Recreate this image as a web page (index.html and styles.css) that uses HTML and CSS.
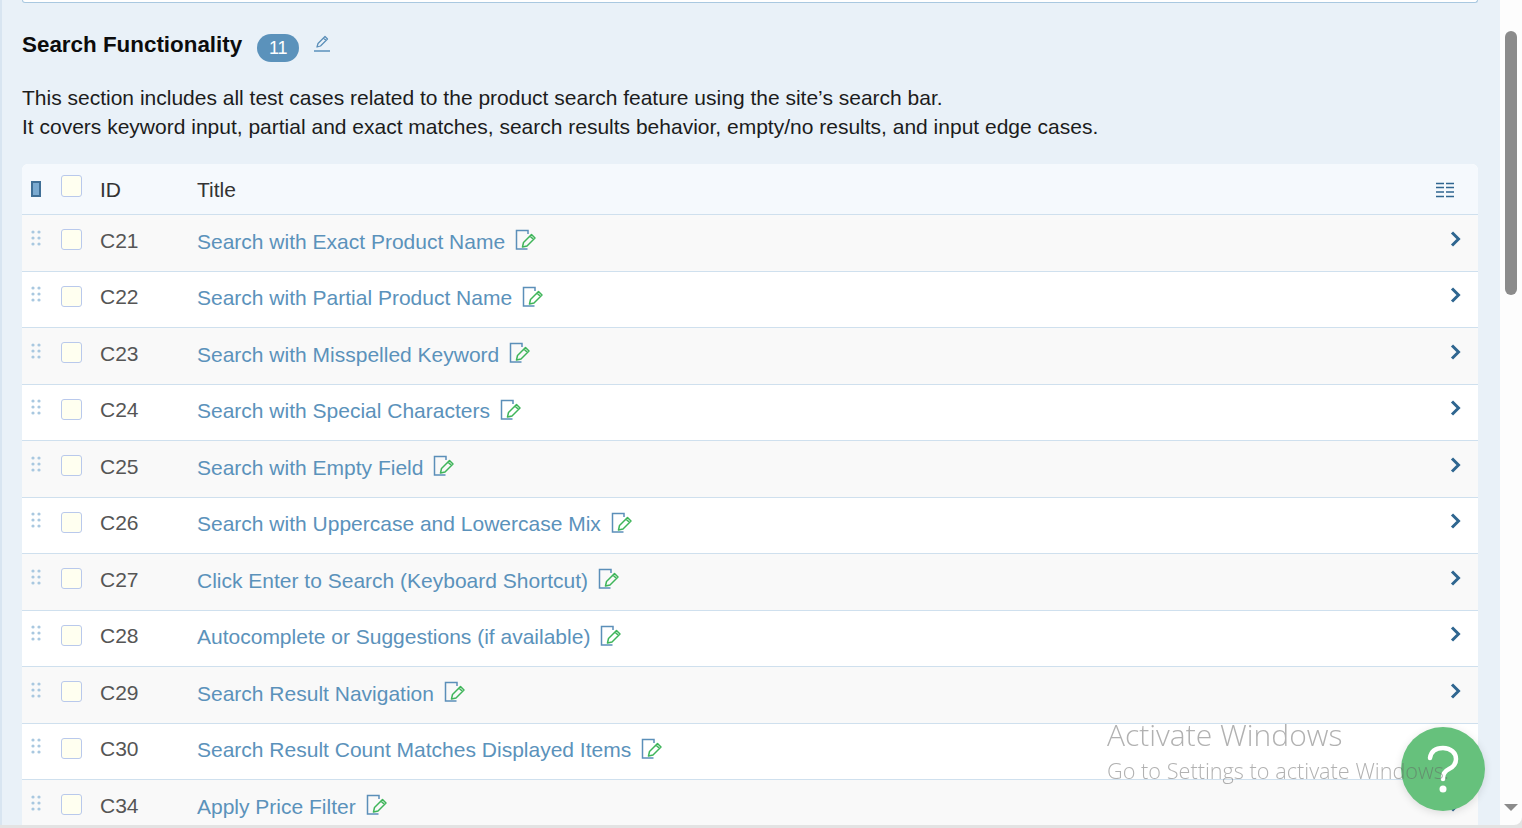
FILE: index.html
```html
<!DOCTYPE html>
<html lang="en">
<head>
    <meta charset="UTF-8">
    <title>Search Functionality</title>
    <link rel="stylesheet" href="styles.css">
</head>
<body>
    <svg class="sprite" width="0" height="0">
        <symbol id="note" viewBox="0 0 22 22">
            <path d="M13 5V1.500H1.500v18.500h11" fill="none" stroke="#5b8fb9" stroke-width="1.500"/>
            <path d="M7.500 18l1-4.500 8-8 3.500 3.500-8 8z M15 7l3.500 3.500" fill="none" stroke="#3fb55a" stroke-width="1.500" stroke-linejoin="round"/>
        </symbol>
        <symbol id="chev" viewBox="0 0 12 16">
            <path d="M2 1.500l6.500 6.500-6.500 6.500" fill="none" stroke="#2f6690" stroke-width="3"/>
        </symbol>
        <symbol id="grip" viewBox="0 0 10 16">
            <g fill="#a9c8e0">
                <circle cx="2" cy="2" r="1.600"/><circle cx="8" cy="2" r="1.600"/>
                <circle cx="2" cy="8" r="1.600"/><circle cx="8" cy="8" r="1.600"/>
                <circle cx="2" cy="14" r="1.600"/><circle cx="8" cy="14" r="1.600"/>
            </g>
        </symbol>
    </svg>

    <div class="window">
        <main class="content">
            <div class="prev-card"></div>

            <div class="section-head">
                <h2>Search Functionality</h2>
                <span class="count">11</span>
                <svg class="edit" width="18" height="20" viewBox="0 0 18 20">
                    <path d="M4 13l1-3.500 7-7 2.500 2.500-7 7z M10.500 4l2.500 2.500" fill="none" stroke="#5b8fb9" stroke-width="1.300" stroke-linejoin="round"/>
                    <rect x="1" y="16" width="16" height="2" fill="#7ea9cb"/>
                </svg>
            </div>

            <p class="desc">This section includes all test cases related to the product search feature using the site’s search bar.<br>It covers keyword input, partial and exact matches, search results behavior, empty/no results, and input edge cases.</p>

            <div class="table">
                <div class="row head">
                    <span class="handle"><i class="marker"></i></span>
                    <span class="check"></span>
                    <span class="id">ID</span>
                    <span class="title">Title</span>
                    <svg class="columns" width="18" height="16" viewBox="0 0 18 16">
                        <path d="M0 1.500h8M10 1.500h8M0 5.500h8M10 5.500h8M0 10h8M10 10h8M0 14.500h8M10 14.500h8" stroke="#2f6690" stroke-width="1.300"/>
                    </svg>
                </div>
                <div class="row"><svg class="grip"><use href="#grip"/></svg><span class="check"></span><span class="id">C21</span><a class="title">Search with Exact Product Name</a><svg class="note"><use href="#note"/></svg><svg class="chev"><use href="#chev"/></svg></div>
                <div class="row"><svg class="grip"><use href="#grip"/></svg><span class="check"></span><span class="id">C22</span><a class="title">Search with Partial Product Name</a><svg class="note"><use href="#note"/></svg><svg class="chev"><use href="#chev"/></svg></div>
                <div class="row"><svg class="grip"><use href="#grip"/></svg><span class="check"></span><span class="id">C23</span><a class="title">Search with Misspelled Keyword</a><svg class="note"><use href="#note"/></svg><svg class="chev"><use href="#chev"/></svg></div>
                <div class="row"><svg class="grip"><use href="#grip"/></svg><span class="check"></span><span class="id">C24</span><a class="title">Search with Special Characters</a><svg class="note"><use href="#note"/></svg><svg class="chev"><use href="#chev"/></svg></div>
                <div class="row"><svg class="grip"><use href="#grip"/></svg><span class="check"></span><span class="id">C25</span><a class="title">Search with Empty Field</a><svg class="note"><use href="#note"/></svg><svg class="chev"><use href="#chev"/></svg></div>
                <div class="row"><svg class="grip"><use href="#grip"/></svg><span class="check"></span><span class="id">C26</span><a class="title">Search with Uppercase and Lowercase Mix</a><svg class="note"><use href="#note"/></svg><svg class="chev"><use href="#chev"/></svg></div>
                <div class="row"><svg class="grip"><use href="#grip"/></svg><span class="check"></span><span class="id">C27</span><a class="title">Click Enter to Search (Keyboard Shortcut)</a><svg class="note"><use href="#note"/></svg><svg class="chev"><use href="#chev"/></svg></div>
                <div class="row"><svg class="grip"><use href="#grip"/></svg><span class="check"></span><span class="id">C28</span><a class="title">Autocomplete or Suggestions (if available)</a><svg class="note"><use href="#note"/></svg><svg class="chev"><use href="#chev"/></svg></div>
                <div class="row"><svg class="grip"><use href="#grip"/></svg><span class="check"></span><span class="id">C29</span><a class="title">Search Result Navigation</a><svg class="note"><use href="#note"/></svg><svg class="chev"><use href="#chev"/></svg></div>
                <div class="row"><svg class="grip"><use href="#grip"/></svg><span class="check"></span><span class="id">C30</span><a class="title">Search Result Count Matches Displayed Items</a><svg class="note"><use href="#note"/></svg><svg class="chev"><use href="#chev"/></svg></div>
                <div class="row"><svg class="grip"><use href="#grip"/></svg><span class="check"></span><span class="id">C34</span><a class="title">Apply Price Filter</a><svg class="note"><use href="#note"/></svg><svg class="chev"><use href="#chev"/></svg></div>
            </div>
        </main>

        <div class="scrollbar">
            <div class="thumb"></div>
            <div class="arrow-down"></div>
        </div>
    </div>

    <div class="activate">
        <div class="activate-big">Activate Windows</div>
        <div class="activate-small">Go to Settings to activate Windows.</div>
    </div>
    <div class="help">
        <svg width="40" height="52" viewBox="0 0 40 52">
            <path d="M7 15C8 8 13 5 20 5c8 0 13 5 13 11 0 5-3 8-7 10-4 2-6 4-6 9v1" fill="none" stroke="#fff" stroke-width="4.500" stroke-linecap="round"/>
            <circle cx="20" cy="46" r="3.500" fill="#fff"/>
        </svg>
    </div>
</body>
</html>
```

FILE: styles.css
```css
html, body {
    margin: 0;
    height: 100%;
    overflow: hidden;
}

body {
    font-family: "Liberation Sans", Arial, sans-serif;
    background-color: #e3e3e3;
    color: #1c1c1c;
}

.sprite {
    display: none;
}

.window {
    display: flex;
    height: 825px;
    overflow: hidden;
    border-bottom-right-radius: 8px;
    background-color: #fdfdfd;
}

.content {
    padding: 0 22px 0 20px;
    flex: none;
    width: 1456px;
    background-color: #e9f1f8;
    border-left: 2px solid #d8e5f1;
    overflow: hidden;
}

.prev-card {
    height: 2px;
    background-color: #fff;
    border: 1px solid #a9c8e0;
    border-top: none;
    border-radius: 0 0 4px 4px;
}

.section-head {
    display: flex;
    align-items: center;
    height: 26px;
    margin-top: 29px;
}

.section-head h2 {
    margin: 0;
    font-size: 22.400px;
    font-weight: bold;
    color: #0c0c0c;
}

.count {
    margin-left: 15px;
    margin-top: 5px;
    width: 42px;
    height: 28px;
    line-height: 28px;
    border-radius: 14px;
    text-align: center;
    font-size: 18px;
    color: #fff;
    background-color: #5b92bb;
}

.edit {
    margin-left: 14px;
    margin-top: -3px;
}

.desc {
    margin: 25px 0 0;
    font-size: 21px;
    line-height: 29px;
}

.table {
    margin-top: 23px;
    background-color: #fff;
    border-radius: 6px 6px 0 0;
}

.row {
    display: flex;
    align-items: center;
    height: 55.500px;
    border-bottom: 1px solid #cfe0ee;
    font-size: 21px;
    background-color: #fff;
}

.row:nth-child(even) {
    background-color: #f9f9f9;
}

.row.head {
    height: 50px;
    background-color: #f5f9fd;
    border-radius: 6px 6px 0 0;
}

.grip {
    width: 10px;
    height: 16px;
    margin: -10px 0 0 9px;
    flex: none;
}

.handle {
    width: 10px;
    margin-left: 9px;
    flex: none;
}

.marker {
    display: block;
    width: 6px;
    height: 12px;
    border: 2px solid #3f6f96;
    background-color: #7aaad0;
}

.check {
    box-sizing: border-box;
    width: 21px;
    height: 21px;
    margin: -6px 0 0 20px;
    flex: none;
    background-color: #fffff0;
    border: 1px solid #b9c9ec;
    border-radius: 3px;
}

.row.head .check {
    margin-top: -6px;
    height: 22px;
}

.id {
    width: 97px;
    margin-left: 18px;
    flex: none;
    margin-top: -4px;
    color: #555;
}

.title {
    margin-top: -2px;
    color: #5b92bb;
}

.row.head .id,
.row.head .title {
    color: #333;
    margin-top: 2px;
}

.note {
    width: 22px;
    height: 22px;
    margin: -5px 0 0 10px;
    flex: none;
}

.chev {
    width: 12px;
    height: 16px;
    margin: -8px 16px 0 auto;
    flex: none;
}

.columns {
    margin: 2px 24px 0 auto;
}

.scrollbar {
    position: relative;
    flex: 1;
}

.thumb {
    position: absolute;
    left: 5px;
    top: 31px;
    width: 12px;
    height: 264px;
    border-radius: 6px;
    background-color: #8b8b8b;
}

.arrow-down {
    position: absolute;
    left: 4px;
    bottom: 14px;
    border-left: 7px solid transparent;
    border-right: 7px solid transparent;
    border-top: 7px solid #8b8b8b;
}

.activate {
    position: fixed;
    left: 1107px;
    top: 716px;
    font-family: "Open Sans", sans-serif;
    font-weight: 300;
    color: rgba(100, 100, 100, 0.5);
    white-space: nowrap;
    z-index: 3;
}

.activate-big {
    font-size: 30px;
    line-height: 38px;
}

.activate-small {
    font-size: 21.700px;
    line-height: 34px;
}

.help {
    position: fixed;
    left: 1401px;
    top: 727px;
    width: 84px;
    height: 84px;
    display: flex;
    align-items: center;
    justify-content: center;
    border-radius: 50%;
    background-color: #66c17c;
    box-shadow: 0 2px 8px rgba(0, 0, 0, 0.12);
    z-index: 2;
}
```
